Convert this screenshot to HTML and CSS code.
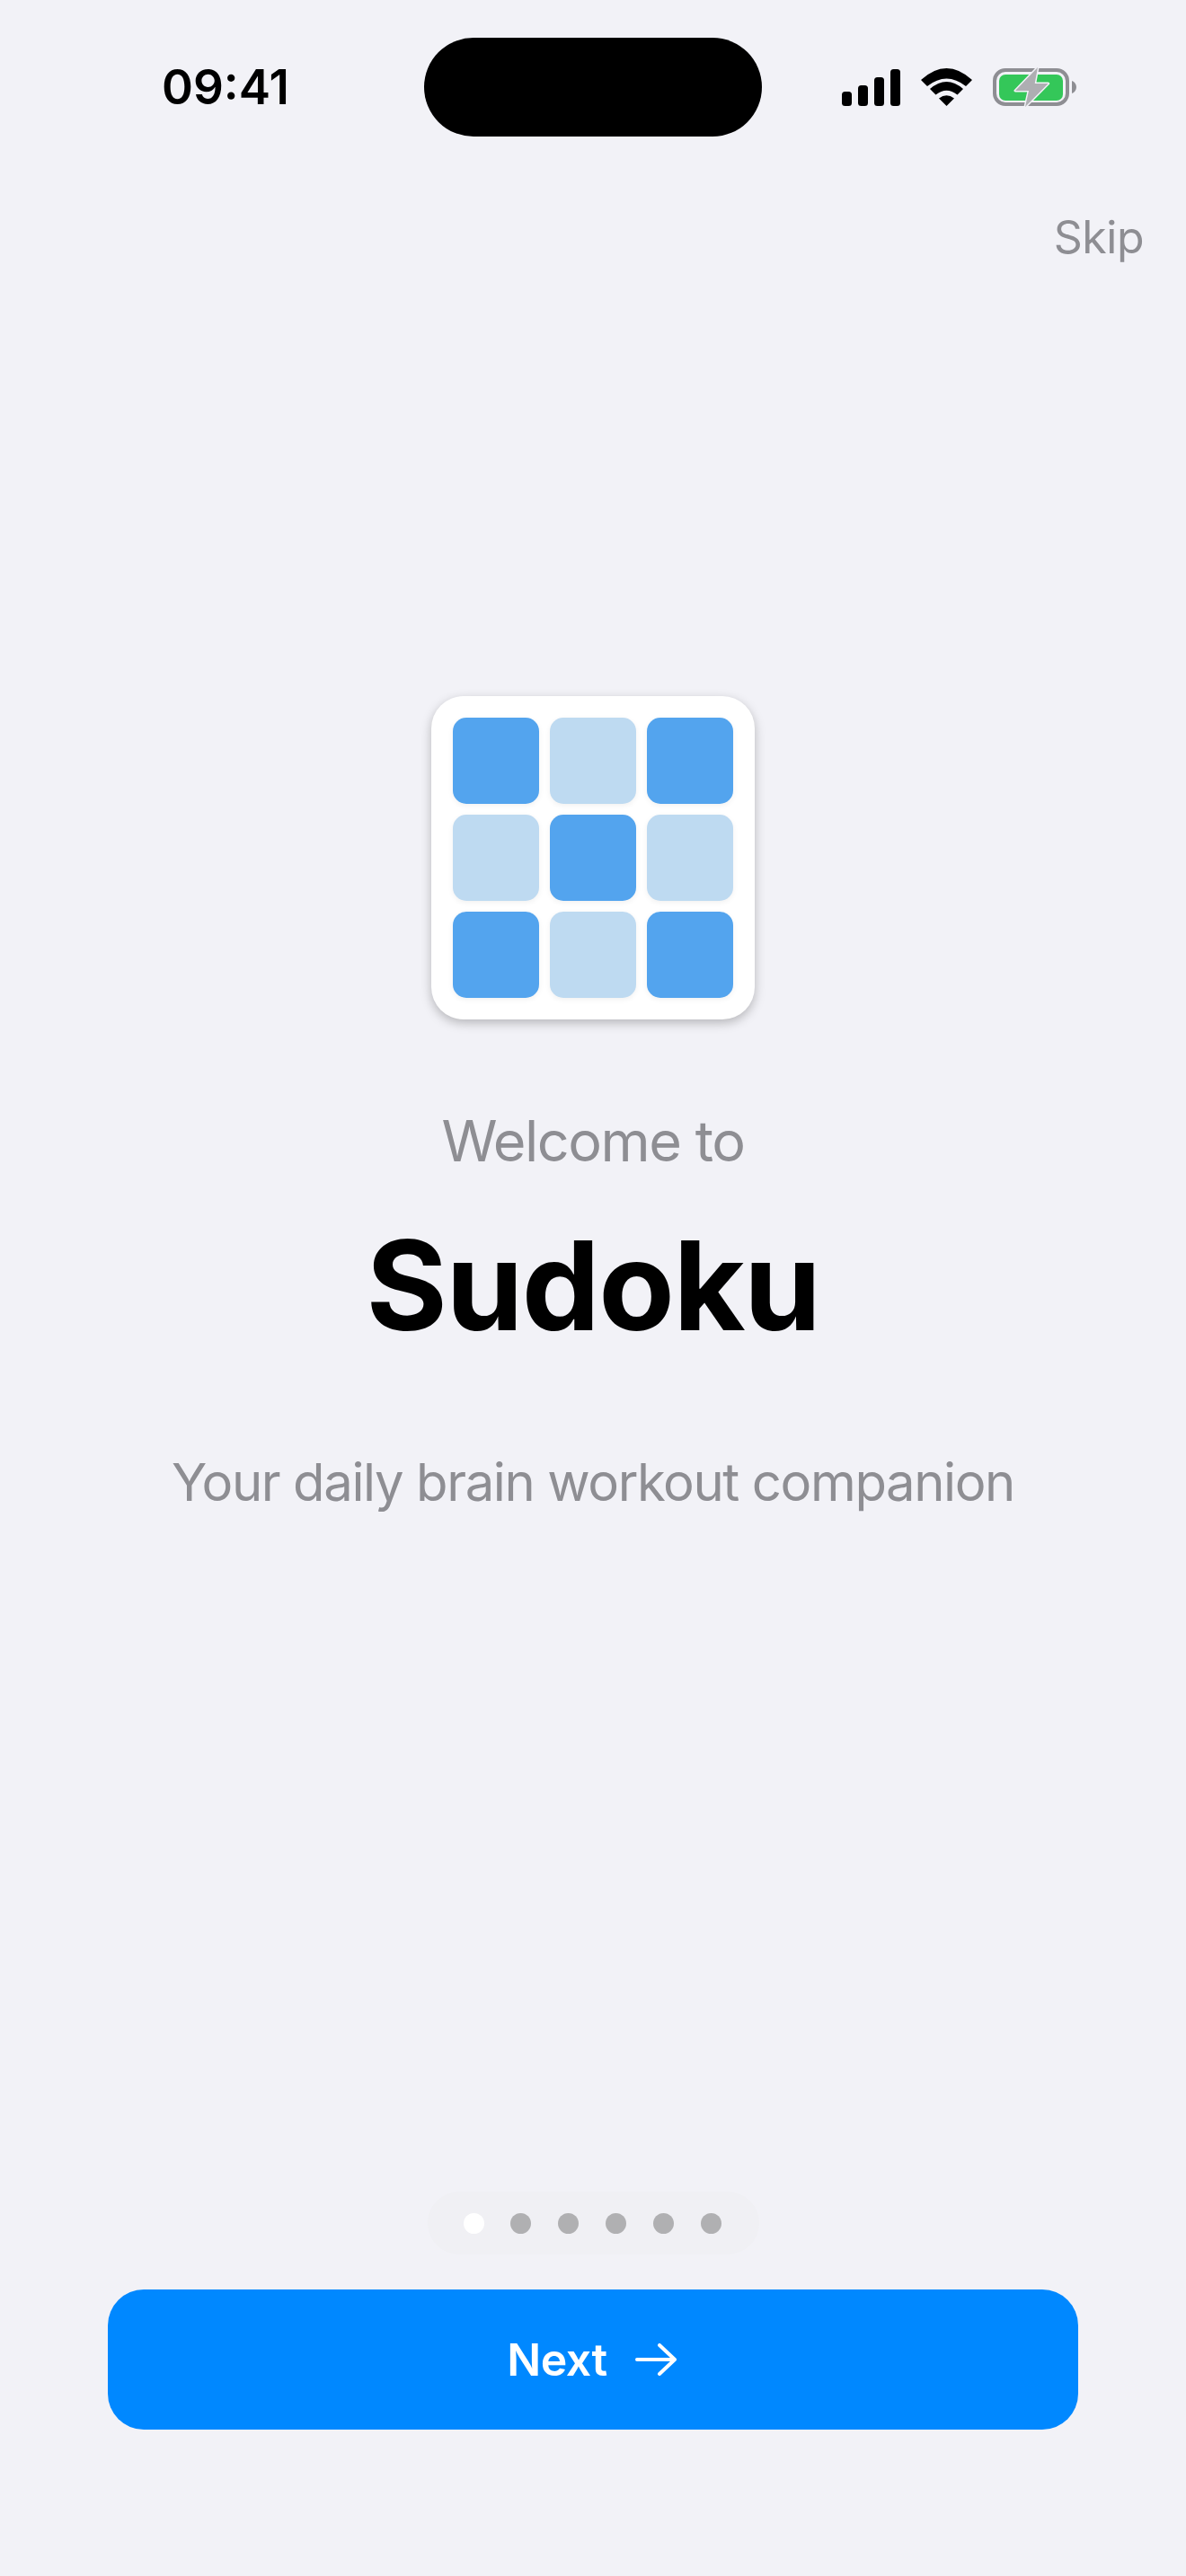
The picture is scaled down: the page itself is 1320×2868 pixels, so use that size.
FILE: index.html
```html
<!DOCTYPE html>
<html lang="en">
<head>
    <meta charset="UTF-8">
    <meta name="viewport" content="width=device-width, initial-scale=1.0">
    <title>Welcome to Sudoku</title>
    <link rel="stylesheet" href="styles.css">
</head>
<body>
    <div class="screen">
        <div class="status-bar">
            <span class="time">09:41</span>
            <div class="island"></div>
            <div class="status-icons">
                <svg class="signal" viewBox="0 0 65 41">
                    <rect x="0" y="25" width="11" height="16" rx="3.5"/>
                    <rect x="18" y="18" width="11" height="23" rx="3.5"/>
                    <rect x="36" y="9" width="11" height="32" rx="3.5"/>
                    <rect x="54" y="0" width="11" height="41" rx="3.5"/>
                </svg>
                <svg class="wifi" viewBox="0 0 57 42">
                    <path d="M0 13Q28.5-13 57 13L50 20Q28.5 3 7 20Z"/>
                    <path d="M10 23Q28.5 7 47 23L40.5 29.5Q28.5 20 16.5 29.5Z"/>
                    <path d="M28.5 42L20 33.5Q28.5 27 37 33.5Z"/>
                </svg>
                <svg class="battery" viewBox="0 -2 93 46">
                    <rect x="2" y="2" width="81" height="38" rx="12" fill="none" stroke="#8e8e93" stroke-width="4"/>
                    <rect x="7" y="7" width="71" height="29" rx="7" fill="#34c759"/>
                    <path d="M88 14C91 15 93 18 93 21C93 24 91 27 88 28Z" fill="#8e8e93"/>
                    <path d="M50-1L25 25H40L36 43L61.7 17H46.7Z" fill="#aeaeb2" stroke="#f2f2f7" stroke-width="3" stroke-linejoin="round" paint-order="stroke"/>
                </svg>
            </div>
        </div>

        <div class="skip-row">
            <a class="skip" href="#">Skip</a>
        </div>

        <div class="intro">
            <div class="logo">
                <div class="cell dark"></div>
                <div class="cell light"></div>
                <div class="cell dark"></div>
                <div class="cell light"></div>
                <div class="cell dark"></div>
                <div class="cell light"></div>
                <div class="cell dark"></div>
                <div class="cell light"></div>
                <div class="cell dark"></div>
            </div>
            <p class="welcome">Welcome to</p>
            <h1 class="title">Sudoku</h1>
            <p class="tagline">Your daily brain workout companion</p>
        </div>

        <div class="footer">
            <div class="dots">
                <span class="dot active"></span>
                <span class="dot"></span>
                <span class="dot"></span>
                <span class="dot"></span>
                <span class="dot"></span>
                <span class="dot"></span>
            </div>
            <button class="next" type="button">
                Next
                <svg class="arrow" viewBox="0 0 46 36">
                    <path d="M2 18H44M27 2L44 18L27 34"/>
                </svg>
            </button>
        </div>
    </div>
</body>
</html>
```

FILE: styles.css
```css
* {
    box-sizing: border-box;
}
html, body {
    margin: 0;
    padding: 0;
}
body {
    font-family: Inter, "Liberation Sans", sans-serif;
    background-color: #f2f2f7;
}
.screen {
    display: flex;
    flex-direction: column;
    height: 2868px;
    overflow: hidden;
}

/* status bar */
.status-bar {
    display: flex;
    align-items: center;
    padding: 42px 0 0 180px;
}
.time {
    width: 292px;
    font-size: 53px;
    font-weight: 600;
    line-height: 110px;
    color: #000;
}
.island {
    width: 376px;
    height: 110px;
    border-radius: 55px;
    background-color: #000;
}
.status-icons {
    display: flex;
    align-items: center;
    gap: 23px;
    margin-left: 89px;
}
.signal {
    width: 65px;
    height: 41px;
    fill: #000;
}
.wifi {
    width: 57px;
    height: 42px;
    fill: #000;
}
.battery {
    width: 93px;
    height: 46px;
}

/* skip */
.skip-row {
    display: flex;
    justify-content: flex-end;
    padding: 82px 47px 0 0;
}
.skip {
    font-size: 50px;
    line-height: 60px;
    letter-spacing: -0.5px;
    color: #8e8e93;
    text-decoration: none;
}

/* middle */
.intro {
    display: flex;
    flex-direction: column;
    align-items: center;
    padding-top: 481px;
}
.logo {
    display: grid;
    grid-template-columns: repeat(3, 96px);
    grid-auto-rows: 96px;
    gap: 12px;
    width: 360px;
    height: 360px;
    padding: 24px;
    border-radius: 36px;
    background-color: #fff;
    box-shadow: 0 4px 12px rgba(0,0,0,0.25);
}
.cell {
    border-radius: 15px;
    box-shadow: 0 2px 6px rgba(0,0,0,0.06);
}
.dark {
    background-color: #53a4ee;
}
.light {
    background-color: #bedaf1;
}
.welcome {
    margin: 99px 0 0;
    font-size: 63px;
    line-height: 72px;
    letter-spacing: -1.5px;
    color: #8e8e93;
}
.title {
    margin: 50px 0 0;
    font-size: 138px;
    font-weight: 700;
    line-height: 150px;
    letter-spacing: -1.5px;
    color: #000;
}
.tagline {
    margin: 108px 0 0;
    font-size: 58px;
    line-height: 72px;
    letter-spacing: -1.4px;
    color: #8e8e93;
}

/* bottom */
.footer {
    display: flex;
    flex-direction: column;
    align-items: center;
    margin-top: auto;
    padding: 0 120px 163px;
}
.dots {
    display: flex;
    align-items: center;
    gap: 30px;
    height: 70px;
    margin-bottom: 39px;
    padding: 0 42px 0 40px;
    border-radius: 35px;
    background-color: #f0f0f4;
}
.dot {
    width: 23px;
    height: 23px;
    border-radius: 50%;
    background-color: #b0b0b2;
}
.dot.active {
    margin-right: -1px;
    background-color: #fff;
}
.next {
    display: flex;
    align-items: center;
    justify-content: center;
    gap: 31px;
    width: 100%;
    height: 156px;
    padding: 0 3px 0 0;
    border: none;
    border-radius: 40px;
    background-color: #0088ff;
    color: #fff;
    font-family: inherit;
    font-size: 50px;
    font-weight: 600;
    letter-spacing: -0.5px;
    cursor: pointer;
}
.arrow {
    width: 46px;
    height: 36px;
    fill: none;
    stroke: #fff;
    stroke-width: 4;
    stroke-linecap: round;
    stroke-linejoin: round;
}
```
